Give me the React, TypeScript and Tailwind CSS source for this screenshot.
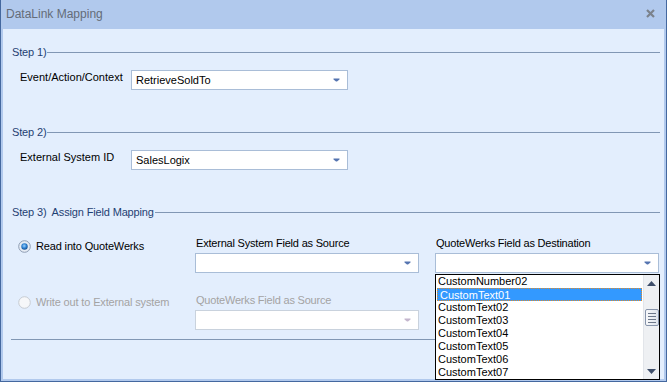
import React from "react";

const font = { fontFamily: '"Liberation Sans", Arial, sans-serif' };

const ITEMS = [
  "CustomNumber02",
  "CustomText01",
  "CustomText02",
  "CustomText03",
  "CustomText04",
  "CustomText05",
  "CustomText06",
  "CustomText07",
];

function Arrow({ disabled = false }: { disabled?: boolean }) {
  return (
    <svg width="7" height="4" viewBox="0 0 7 4">
      <path d="M0.5 0.5H6.5V1.5L4 3.5H3L0.5 1.5Z" fill={disabled ? "#c4b6cd" : "#5574b0"} />
    </svg>
  );
}

function Combo({
  value,
  width,
  disabled = false,
}: {
  value?: string;
  width: string;
  disabled?: boolean;
}) {
  return (
    <div
      className={`${width} h-[20px] bg-white border flex items-center justify-between pl-[4px] pr-[7px] ${
        disabled ? "border-[#c9d2dd]" : "border-[#a9bdd7]"
      }`}
    >
      <span className="text-[11px] text-black">{value}</span>
      <Arrow disabled={disabled} />
    </div>
  );
}

function GroupHeader({ title }: { title: string }) {
  return (
    <div className="flex items-center h-[13px]">
      <span className="text-[11px] leading-[13px] text-[#1f3f73] pl-[1px] pr-[1px] tracking-[-0.15px] whitespace-pre">
        {title}
      </span>
      <div className="flex-1 h-px bg-[#8197b4]" />
    </div>
  );
}

function Radio({ checked, disabled }: { checked?: boolean; disabled?: boolean }) {
  return (
    <svg width="13" height="13" viewBox="0 0 13 13">
      <defs>
        <radialGradient id="dot" cx="45%" cy="40%" r="60%">
          <stop offset="0%" stopColor="#9fd2ff" />
          <stop offset="60%" stopColor="#2a7fd0" />
          <stop offset="100%" stopColor="#1a4f8f" />
        </radialGradient>
      </defs>
      <circle
        cx="6.5"
        cy="6.5"
        r="5.8"
        fill={disabled ? "#f6f7f9" : "#e6ecf4"}
        stroke={disabled ? "#c7ccd3" : "#8e9db4"}
        strokeWidth="1"
      />
      {checked && <circle cx="6.5" cy="6.5" r="3.2" fill="url(#dot)" />}
    </svg>
  );
}

function DropList() {
  return (
    <div className="absolute left-0 top-[21px] w-[225px] h-[106px] border border-black bg-white flex z-10">
      <div className="flex-1 flex flex-col">
        {ITEMS.map((item, i) => (
          <div
            key={item}
            className={`h-[13px] leading-[12px] text-[11px] pl-[2px] ${
              i === 1
                ? "bg-[#3399ff] text-white border border-dotted border-[#e08a28] mx-[1px] pl-[1px]"
                : "text-black"
            }`}
          >
            {item}
          </div>
        ))}
      </div>
      {/* scrollbar */}
      <div className="w-[16px] bg-[#eef0f3] border-l border-[#e2e5ea] flex flex-col items-center">
        <div className="h-[16px] flex items-center justify-center">
          <svg width="9" height="5" viewBox="0 0 9 5">
            <path d="M4.5 0L9 5H0Z" fill="#3e4e6a" />
          </svg>
        </div>
        <div className="h-[18px]" />
        <div className="w-[14px] h-[17px] border border-[#8794ab] rounded-[2px] bg-gradient-to-r from-[#f7f8fa] to-[#dfe4ec] flex flex-col items-center justify-center gap-[2px]">
          <div className="w-[8px] h-px bg-[#6c778a]" />
          <div className="w-[8px] h-px bg-[#6c778a]" />
          <div className="w-[8px] h-px bg-[#6c778a]" />
          <div className="w-[8px] h-px bg-[#6c778a]" />
        </div>
        <div className="flex-1" />
        <div className="h-[16px] flex items-center justify-center">
          <svg width="9" height="5" viewBox="0 0 9 5">
            <path d="M0 0H9L4.5 5Z" fill="#3e4e6a" />
          </svg>
        </div>
      </div>
    </div>
  );
}

export default function App() {
  return (
    <div style={font} className="w-[667px] h-[382px] bg-[#44689f] px-px pb-px">
      <div className="h-full bg-[#b1c9ed] flex flex-col">
        {/* title bar */}
        <div className="h-[29px] flex items-center justify-between pl-[5px] pr-[11px]">
          <span className="text-[12px] text-[#646c78] -mt-[2px]">DataLink Mapping</span>
          <svg width="9" height="9" viewBox="0 0 9 9" className="-mt-[2px]">
            <path d="M1 1L8 8M8 1L1 8" stroke="#7b828c" strokeWidth="2.2" />
          </svg>
        </div>

        {/* content */}
        <div className="flex-1 mx-[2px] mb-[2px] bg-[#e3eefd] pl-[8px] pr-[4px] pt-[17px] text-[11px] text-black">
          <GroupHeader title="Step 1)" />
          <div className="flex items-start mt-[11px] pl-[9px]">
            <span className="w-[111px] leading-[13px] pt-px">Event/Action/Context</span>
            <Combo value="RetrieveSoldTo" width="w-[217px]" />
          </div>

          <div className="mt-[36px]">
            <GroupHeader title="Step 2)" />
          </div>
          <div className="flex items-start mt-[11px] pl-[9px]">
            <span className="w-[111px] leading-[13px] pt-px">External System ID</span>
            <Combo value="SalesLogix" width="w-[217px]" />
          </div>

          <div className="mt-[36px]">
            <GroupHeader title="Step 3)  Assign Field Mapping" />
          </div>

          <div className="mt-[18px] flex items-start">
            <div className="w-[184px] flex items-center gap-[5px] pl-[7px] pt-[3px]">
              <Radio checked />
              <span className="leading-[13px] tracking-[-0.15px]">Read into QuoteWerks</span>
            </div>
            <div className="w-[240px] flex flex-col">
              <span className="leading-[13px] tracking-[-0.2px] pl-px">External System Field as Source</span>
              <div className="mt-[3px]">
                <Combo width="w-[224px]" />
              </div>
            </div>
            <div className="flex flex-col">
              <span className="leading-[13px] tracking-[-0.2px] pl-px">QuoteWerks Field as Destination</span>
              <div className="mt-[3px] relative">
                <Combo width="w-[224px]" />
                <DropList />
              </div>
            </div>
          </div>

          <div className="mt-[21px] flex items-start">
            <div className="w-[184px] flex items-center gap-[5px] pl-[7px] pt-[2px]">
              <Radio disabled />
              <span className="leading-[13px] tracking-[-0.15px] text-[#a3a3a3]">Write out to External system</span>
            </div>
            <div className="w-[240px] flex flex-col">
              <span className="leading-[13px] tracking-[-0.2px] pl-px text-[#a3a3a3]">QuoteWerks Field as Source</span>
              <div className="mt-[3px]">
                <Combo width="w-[224px]" disabled />
              </div>
            </div>
          </div>

          <div className="mt-[9px] h-px bg-[#8197b4]" />
        </div>
      </div>
    </div>
  );
}
